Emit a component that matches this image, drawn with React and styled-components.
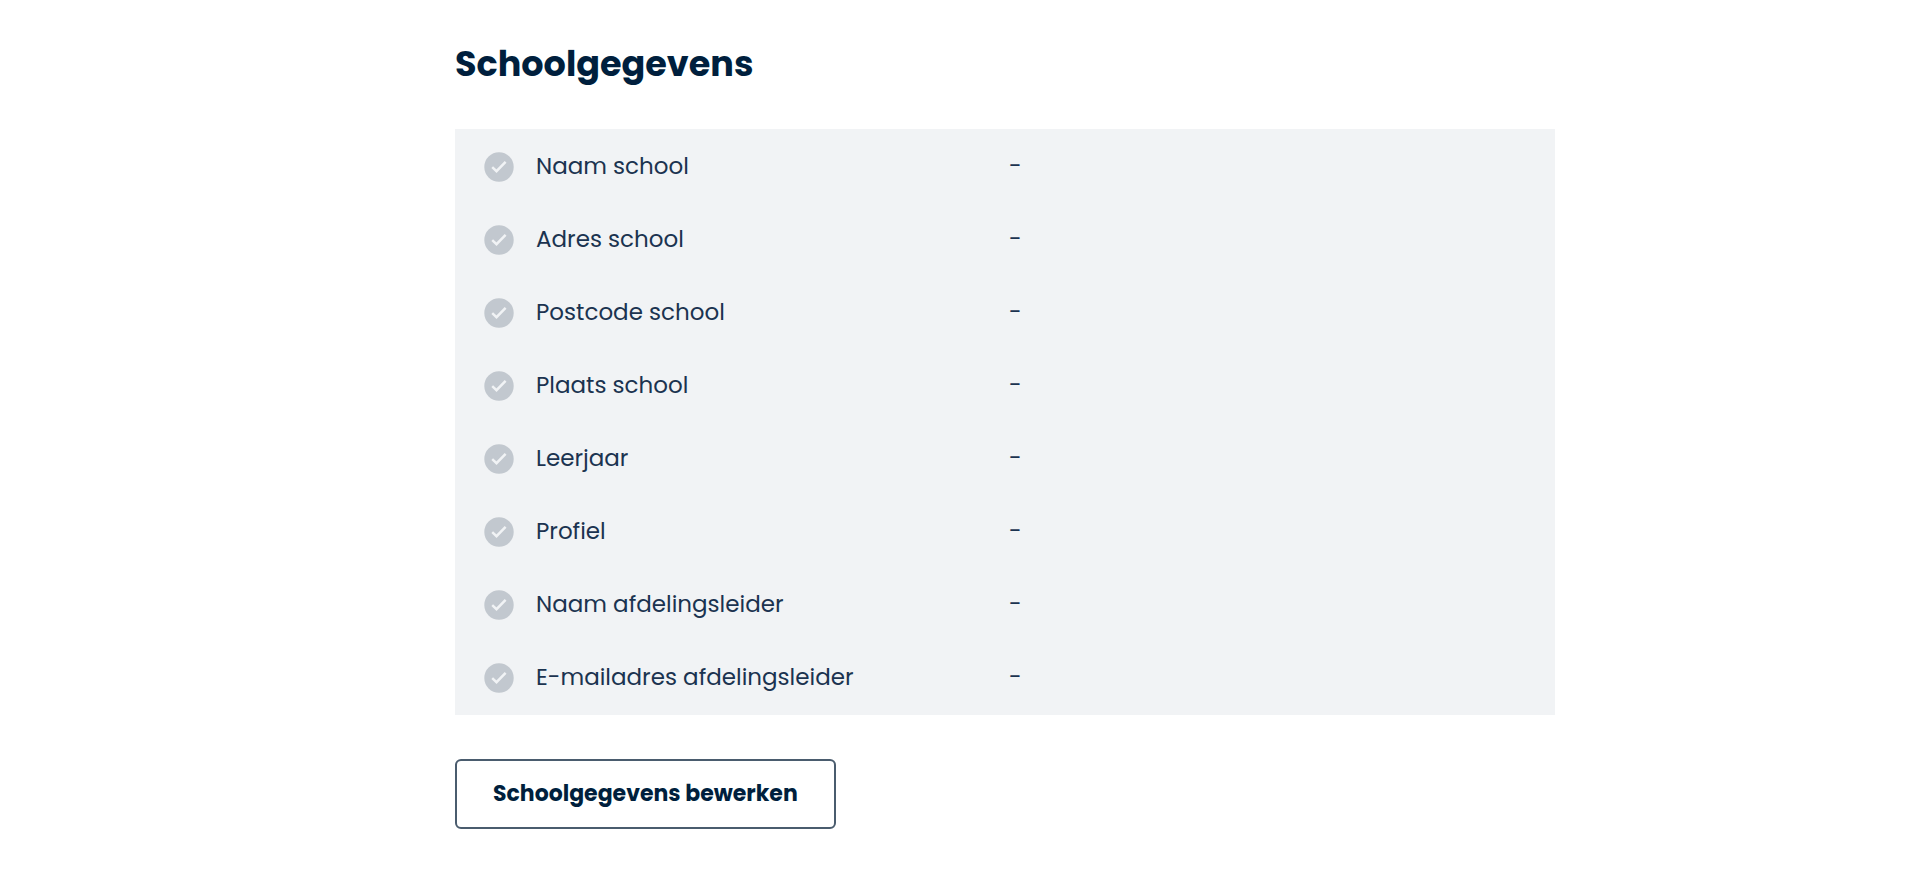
import styled, { createGlobalStyle, ThemeProvider } from 'styled-components';

const theme = {
  colors: {
    navy: '#001f3d',
    text: '#1b3350',
    border: '#4a5c6e',
    grey: '#c2c8cf',
    panel: '#f1f3f5',
    white: '#ffffff',
  },
};

const FIELDS = [
  { label: 'Naam school', value: '-' },
  { label: 'Adres school', value: '-' },
  { label: 'Postcode school', value: '-' },
  { label: 'Plaats school', value: '-' },
  { label: 'Leerjaar', value: '-' },
  { label: 'Profiel', value: '-' },
  { label: 'Naam afdelingsleider', value: '-' },
  { label: 'E-mailadres afdelingsleider', value: '-' },
];

const GlobalStyle = createGlobalStyle`
  * {
    box-sizing: border-box;
  }

  body {
    margin: 0;
    background: ${theme.colors.white};
    font-family: Poppins, Inter, 'Open Sans', sans-serif;
  }
`;

const Page = styled.main`
  display: flex;
  justify-content: center;
  padding: 40px 0 40px 90px;
`;

const Section = styled.section`
  width: 100%;
  max-width: 1100px;
`;

const Title = styled.h1(
  ({ theme }) => `
    margin: 0 0 41px;
    color: ${theme.colors.navy};
    font-size: 35px;
    font-weight: 700;
    line-height: 48px;
  `
);

const Table = styled.table(
  ({ theme }) => `
    width: 100%;
    padding: 1px 0;
    border-spacing: 0;
    table-layout: fixed;
    background: ${theme.colors.panel};
    color: ${theme.colors.text};
    font-size: 23px;
    line-height: 37px;
  `
);

const LabelCell = styled.th`
  width: 50%;
  padding: 18px 0 18px 29px;
  font-weight: 400;
  text-align: left;
`;

const ValueCell = styled.td`
  padding: 18px 29px 18px 4px;
`;

const Label = styled.div`
  display: flex;
  align-items: center;
  gap: 22px;
`;

const CheckSvg = styled.svg`
  flex: none;
  width: 30px;
  height: 30px;
`;

const Button = styled.button(
  ({ theme }) => `
    margin-top: 44px;
    padding: 17px 36px;
    border: 2px solid ${theme.colors.border};
    border-radius: 6px;
    background: ${theme.colors.white};
    color: ${theme.colors.navy};
    font-family: inherit;
    font-size: 22px;
    font-weight: 700;
    line-height: 32px;
    cursor: pointer;
  `
);

const Check = () => (
  <CheckSvg viewBox="0 0 30 30" aria-hidden="true">
    <circle cx="15" cy="15" r="14.7" fill={theme.colors.grey} />
    <path
      d="M8.2 15.2 L12.5 19.2 L21.6 9.8"
      fill="none"
      stroke={theme.colors.panel}
      strokeWidth="2.5"
    />
  </CheckSvg>
);

export const App = () => (
  <ThemeProvider theme={theme}>
    <GlobalStyle />
    <Page>
      <Section>
        <Title id="school-title">Schoolgegevens</Title>
        <Table aria-labelledby="school-title">
          <tbody>
            {FIELDS.map(({ label, value }) => (
              <tr key={label}>
                <LabelCell scope="row">
                  <Label>
                    <Check />
                    {label}
                  </Label>
                </LabelCell>
                <ValueCell>{value}</ValueCell>
              </tr>
            ))}
          </tbody>
        </Table>
        <Button type="button">Schoolgegevens bewerken</Button>
      </Section>
    </Page>
  </ThemeProvider>
);

export default App;
